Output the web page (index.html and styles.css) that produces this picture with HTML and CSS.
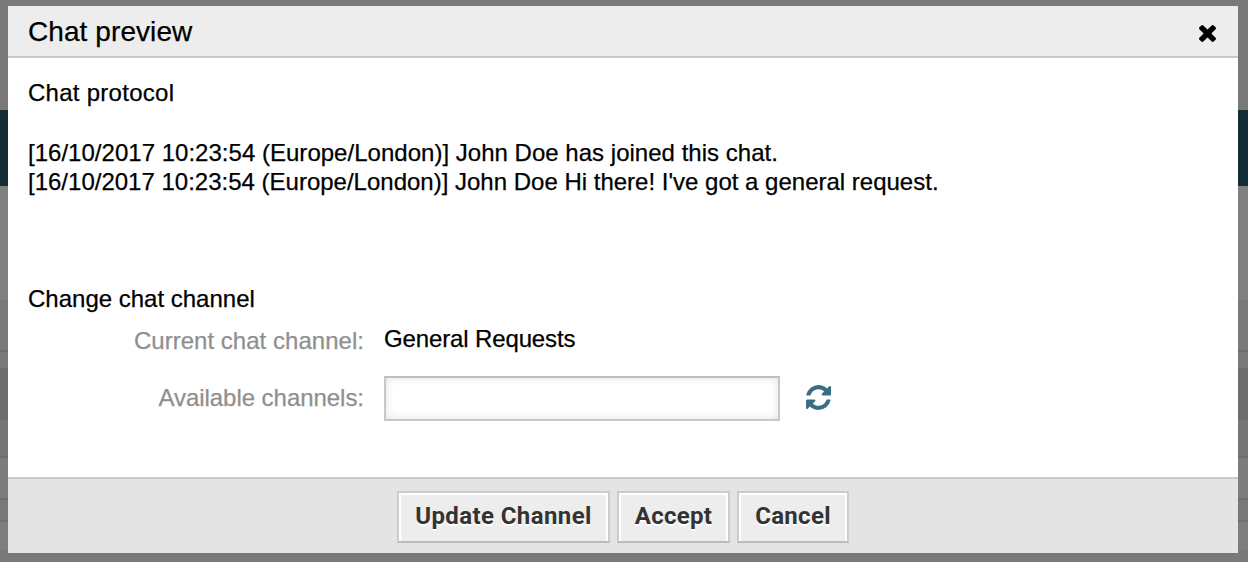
FILE: index.html
```html
<!DOCTYPE html>
<html lang="en">
<head>
<meta charset="utf-8">
<title>Chat preview</title>
<link rel="stylesheet" href="styles.css">
</head>
<body>
<div class="dialog">
  <header class="header">
    <h1 class="title">Chat preview</h1>
    <svg class="close" viewBox="302 366 1188 1188" role="img" aria-label="Close"><path d="M1490 1322q0 40-28 68l-136 136q-28 28-68 28t-68-28l-294-294-294 294q-28 28-68 28t-68-28l-136-136q-28-28-28-68t28-68l294-294-294-294q-28-28-28-68t28-68l136-136q28-28 68-28t68 28l294 294 294-294q28-28 68-28t68 28l136 136q28 28 28 68t-28 68l-294 294 294 294q28 28 28 68z"/></svg>
  </header>
  <main class="content">
    <h2 class="heading protocol-heading">Chat protocol</h2>
    <div class="log">
      <p class="entry first">[16/10/2017 10:23:54 (Europe/London)] John Doe has joined this chat.</p>
      <p class="entry second">[16/10/2017 10:23:54 (Europe/London)] John Doe Hi there! I've got a general request.</p>
    </div>
    <h2 class="heading channel-heading">Change chat channel</h2>
    <div class="row current">
      <span class="label current-label">Current chat channel:</span>
      <span class="value">General Requests</span>
    </div>
    <div class="row available">
      <label class="label available-label" for="channel">Available channels:</label>
      <input class="field" id="channel" type="text">
      <svg class="refresh" viewBox="0 0 1536 1536" role="img" aria-label="Refresh"><path d="M1511 928q0 5-1 7-64 268-268 434.5T764 1536q-146 0-282.5-55T238 1324l-129 129q-19 19-45 19t-45-19-19-45V960q0-26 19-45t45-19h448q26 0 45 19t19 45-19 45l-137 137q71 66 161 102t187 36q134 0 250-65t186-179q11-17 53-117 8-23 30-23h192q13 0 22.5 9.5t9.5 22.5zm25-800v448q0 26-19 45t-45 19h-448q-26 0-45-19t-19-45 19-45l138-138Q969 256 768 256q-134 0-250 65T332 500q-11 17-53 117-8 23-30 23H50q-13 0-22.5-9.5T18 608v-7q65-268 270-434.5T768 0q146 0 284 55.5T1297 212l130-129q19-19 45-19t45 19 19 45z"/></svg>
    </div>
  </main>
  <footer class="footer">
    <button class="button update">Update Channel</button>
    <button class="button accept">Accept</button>
    <button class="button cancel">Cancel</button>
  </footer>
</div>
</body>
</html>
```

FILE: styles.css
```css
* { box-sizing: border-box; }

body {
  margin: 0;
  height: 562px;
  padding: 6px 10px 9px 8px;
  overflow: hidden;
  font: 24px/29px "Liberation Sans", Arial, sans-serif;
  color: #000;
  -webkit-text-stroke: 0.25px;
  background: linear-gradient(
    #797979 0 110px, #142c34 110px 186px, #808080 186px 300px,
    #7a7a7a 300px 350px, #6e6e6e 350px 352px, #797979 352px 368px,
    #6d6d6d 368px 420px, #757575 420px 456px, #6c6c6c 456px 458px,
    #7d7d7d 458px 498px, #6f6f6f 498px 500px, #787878 500px 520px,
    #707070 520px 522px, #7e7e7e 522px 550px, #797979 550px);
}

.dialog {
  height: 547px;
  display: flex;
  flex-direction: column;
  background: #fff;
}

.header {
  height: 52px;
  padding: 0 22px 0 20px;
  display: flex;
  align-items: center;
  justify-content: space-between;
  background: #ededed;
  border-bottom: 2px solid #c9c9c9;
}

.title { margin: 0; padding-top: 2px; font-size: 28px; line-height: 32px; font-weight: 400; letter-spacing: 0.08px; }
.close { width: 17px; height: 17px; margin-top: 4px; }

.content { flex: 1; padding: 20px; }
.heading { margin: 0; font-size: 24px; font-weight: 400; line-height: 29px; }
.protocol-heading { letter-spacing: 0.27px; }
.log { height: 146px; margin-top: 31px; }
.entry { margin: 0; white-space: nowrap; }
.first { letter-spacing: 0.02px; }

.row { display: flex; align-items: center; }
.current { height: 29px; margin-top: 12px; }
.available { height: 45px; margin-top: 22px; }
.label { width: 336px; text-align: right; color: #8f8f8f; white-space: nowrap; }
.current-label { padding-top: 2px; letter-spacing: 0.03px; }
.available-label { padding-bottom: 2px; letter-spacing: -0.04px; }
.value { margin-left: 20px; padding-bottom: 2px; white-space: nowrap; letter-spacing: -0.13px; }

.field {
  width: 396px;
  height: 45px;
  margin-left: 20px;
  border: 2px solid #c8c8c8;
  border-top-color: #bebebe;
  background: #fff;
  box-shadow: inset 0 0 10px #e2e2e2;
}

.refresh { width: 25px; height: 25px; margin-left: 26px; margin-bottom: 3px; fill: #3b6e84; }

.footer {
  height: 76px;
  padding: 12px 0 0 389px;
  display: flex;
  gap: 7px;
  background: #e4e4e4;
  border-top: 2px solid #c9c9c9;
}

.button {
  height: 52px;
  padding: 0 0 2px;
  border: 2px solid #ccc;
  border-bottom-color: #bbb;
  background: #ededed;
  box-shadow: inset 2px 2px #fff, inset -2px 0 #fff;
  font: 700 24px/28px Roboto, sans-serif;
  letter-spacing: 0.4px;
  color: #333;
  text-shadow: 0 2px #fff;
  white-space: nowrap;
  -webkit-text-stroke: 0;
}

.update { width: 213px; }
.accept { width: 113px; letter-spacing: 0.3px; }
.cancel { width: 112px; letter-spacing: 0.3px; }
```
